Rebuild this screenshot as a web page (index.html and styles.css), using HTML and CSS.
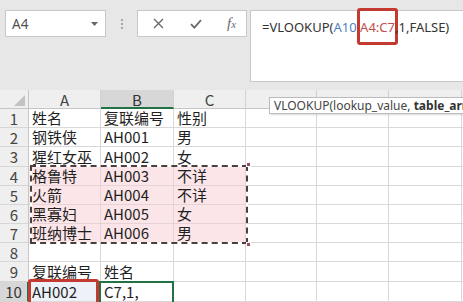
FILE: index.html
```html
<!DOCTYPE html>
<html lang="zh">
<head>
<meta charset="utf-8">
<title>VLOOKUP</title>
<link rel="stylesheet" href="styles.css">
</head>
<body>
<div class="app">
  <div class="fbar">
    <div class="namebox">
      <span class="nb-text">A4</span>
      <svg class="nb-arrow" width="7" height="4" viewBox="0 0 7 4"><path d="M0 0H7L3.5 4Z" fill="#666"/></svg>
    </div>
    <div class="sep"><i></i><i></i><i></i></div>
    <div class="btns">
      <svg class="ico" width="11" height="11" viewBox="0 0 11 11"><path d="M1 1L10 10M10 1L1 10" stroke="#6b6b6b" stroke-width="1.4" fill="none"/></svg>
      <svg class="ico" width="12" height="10" viewBox="0 0 12 10"><path d="M1 5.2L4.3 8.6L11 1.2" stroke="#6b6b6b" stroke-width="1.8" fill="none"/></svg>
      <span class="fx">f<small>x</small></span>
    </div>
    <div class="formula">=VLOOKUP(<span class="ref1">A10</span>,<span class="ref2">A4:C7</span>,1,FALSE)</div>
  </div>

  <div class="tooltip">VLOOKUP(lookup_value, <b>table_array</b>, col_index_num, [range_lookup])</div>

  <div class="sheet">
    <div class="grid">
      <div class="hd corner"><span class="tri"></span></div>
      <div class="hd">A</div>
      <div class="hd sel-col">B</div>
      <div class="hd">C</div>
      <div class="hd"></div>
      <div class="hd"></div>
      <div class="hd"></div>
      <div class="hd edge"></div>

      <div class="rh">1</div><div class="c">姓名</div><div class="c">复联编号</div><div class="c">性别</div><div class="c"></div><div class="c"></div><div class="c"></div><div class="c edge"></div>
      <div class="rh">2</div><div class="c">钢铁侠</div><div class="c">AH001</div><div class="c">男</div><div class="c"></div><div class="c"></div><div class="c"></div><div class="c edge"></div>
      <div class="rh">3</div><div class="c">猩红女巫</div><div class="c">AH002</div><div class="c">女</div><div class="c"></div><div class="c"></div><div class="c"></div><div class="c edge"></div>
      <div class="rh">4</div><div class="c pk">格鲁特</div><div class="c pk">AH003</div><div class="c pk">不详</div><div class="c"></div><div class="c"></div><div class="c"></div><div class="c edge"></div>
      <div class="rh">5</div><div class="c pk">火箭</div><div class="c pk">AH004</div><div class="c pk">不详</div><div class="c"></div><div class="c"></div><div class="c"></div><div class="c edge"></div>
      <div class="rh">6</div><div class="c pk">黑寡妇</div><div class="c pk">AH005</div><div class="c pk">女</div><div class="c"></div><div class="c"></div><div class="c"></div><div class="c edge"></div>
      <div class="rh">7</div><div class="c pk">班纳博士</div><div class="c pk">AH006</div><div class="c pk">男</div><div class="c"></div><div class="c"></div><div class="c"></div><div class="c edge"></div>
      <div class="rh">8</div><div class="c"></div><div class="c"></div><div class="c"></div><div class="c"></div><div class="c"></div><div class="c"></div><div class="c edge"></div>
      <div class="rh">9</div><div class="c">复联编号</div><div class="c">姓名</div><div class="c"></div><div class="c"></div><div class="c"></div><div class="c"></div><div class="c edge"></div>
      <div class="rh sel-row">10</div><div class="c a10">AH002</div><div class="c">C7,1,</div><div class="c"></div><div class="c"></div><div class="c"></div><div class="c"></div><div class="c edge"></div>
    </div>

    <div class="grid overlay">
      <div class="ants"><div class="ants-in"></div><span class="hdl h-tr"></span><span class="hdl h-br"></span></div>
      <div class="redbox"></div>
      <div class="active"></div>
    </div>
  </div>
</div>
</body>
</html>
```

FILE: styles.css
```css
* { box-sizing: border-box; }
html, body { margin: 0; padding: 0; }
body {
  width: 463px;
  height: 302px;
  overflow: hidden;
  background: #e7e7e7;
  font-family: "Noto Sans", "Noto Sans CJK SC", sans-serif;
}
.app {
  position: relative;
  width: 463px;
  height: 302px;
  overflow: hidden;
}

/* formula bar */
.fbar {
  display: flex;
  align-items: flex-start;
  height: 90px;
  padding: 10px 0 0 5px;
}
.namebox {
  width: 101px;
  height: 27px;
  background: #fff;
  border: 1px solid #c8c8c8;
  display: flex;
  align-items: center;
  justify-content: space-between;
  padding: 0 7px 0 6px;
  color: #505050;
  font-size: 13.5px;
}
.nb-text { padding-top: 1px; }
.nb-arrow { margin-top: 1px; }
.sep {
  width: 31px;
  height: 27px;
  display: flex;
  flex-direction: column;
  align-items: center;
  justify-content: center;
  gap: 2px;
}
.sep i {
  display: block;
  width: 2px;
  height: 2px;
  background: #a8a8a8;
}
.btns {
  width: 110px;
  height: 27px;
  background: #fff;
  border: 1px solid #c8c8c8;
  display: flex;
  align-items: center;
  padding: 0 0 0 15px;
  gap: 25px;
}
.ico { display: block; flex: none; }
.btns .ico:nth-child(2) { margin-left: 1px; }
.fx {
  font-family: "Liberation Serif", serif;
  font-style: italic;
  color: #6b6b6b;
  font-size: 15px;
}
.fx small { font-size: 11px; }
.formula {
  margin-left: 3px;
  flex: 1;
  height: 72px;
  background: #fff;
  border: 1px solid #c8c8c8;
  border-right: none;
  padding: 7px 0 0 11px;
  font-size: 13px;
  color: #333;
  white-space: nowrap;
  line-height: 18px;
}
.ref1 { color: #4f81bd; }
.ref2 {
  color: #c0504d;
  border: 3px solid #c53a30;
  border-radius: 3px;
  margin: 0 -3px;
  padding: 7px 0 6px;
}

/* tooltip */
.tooltip {
  position: absolute;
  left: 269px;
  top: 97px;
  height: 17px;
  padding: 0 0 0 4px;
  background: #fff;
  border: 1px solid #bcbcbc;
  box-shadow: 1px 1px 2px rgba(0,0,0,0.15);
  font-size: 12px;
  line-height: 15px;
  color: #444;
  white-space: nowrap;
  z-index: 5;
}
.tooltip b { color: #333; }

/* grid */
.sheet { position: relative; }
.grid {
  display: grid;
  grid-template-columns: 29px 72px 73px 72px 71px 72px 73px 1px;
  grid-template-rows: 19px 19px 19px 20px 19px 19px 19px 19px 19px 20px 20px;
  background: #fff;
}
.overlay {
  position: absolute;
  inset: 0;
  background: transparent;
  pointer-events: none;
}
.hd {
  background: #efefef;
  border-right: 1px solid #d2d2d2;
  border-bottom: 1px solid #c6c6c6;
  text-align: center;
  font-size: 15px;
  line-height: 19px;
  color: #444;
  font-family: "Noto Sans CJK SC", sans-serif;
}
.corner { position: relative; border-right-color: #c6c6c6; }
.tri {
  position: absolute;
  right: 3px;
  bottom: 2px;
  width: 0;
  height: 0;
  border-left: 11px solid transparent;
  border-bottom: 11px solid #c2c2c2;
}
.sel-col {
  background: #d7d7d7;
  border-bottom: 2px solid #217346;
  color: #333;
}
.rh {
  background: #efefef;
  border-right: 1px solid #c6c6c6;
  border-bottom: 1px solid #d6d6d6;
  text-align: center;
  font-size: 15px;
  line-height: 19px;
  color: #444;
  font-family: "Noto Sans CJK SC", sans-serif;
}
.sel-row {
  background: #d7d7d7;
  border-right: 2px solid #217346;
  color: #333;
}
.c {
  border-right: 1px solid #d9d9d9;
  border-bottom: 1px solid #d9d9d9;
  font-family: "Noto Sans CJK SC", sans-serif;
  font-size: 15px;
  line-height: 19px;
  color: #1f1f1f;
  padding: 0 0 0 3px;
  white-space: nowrap;
  display: flex;
  align-items: flex-end;
}
.pk { background: #fbe5e8; border-color: #e5d3d5; }
.a10 { background: #eef2f8; }
.edge { border-right: none; }

/* overlays */
.ants {
  grid-row: 5 / 9;
  grid-column: 2 / 5;
  margin: -2px -2px -1px 1px;
  border: 2px solid #fff;
  position: relative;
}
.ants-in {
  position: absolute;
  inset: -2px;
  border: 2px dashed #4a4040;
}
.hdl {
  position: absolute;
  width: 5px;
  height: 5px;
  background: #9b4a60;
  border: 1px solid #fff;
}
.h-tr { right: -5px; top: -5px; }
.h-br { right: -5px; bottom: -5px; }
.redbox {
  grid-row: 11;
  grid-column: 2;
  margin: -3px 2px -4px -1px;
  border: 3px solid #c53a30;
  border-radius: 3px;
  position: relative;
  z-index: 3;
}
.active {
  grid-row: 11;
  grid-column: 3;
  margin: -1px 0 -3px -2px;
  border: 2px solid #217346;
}
```
